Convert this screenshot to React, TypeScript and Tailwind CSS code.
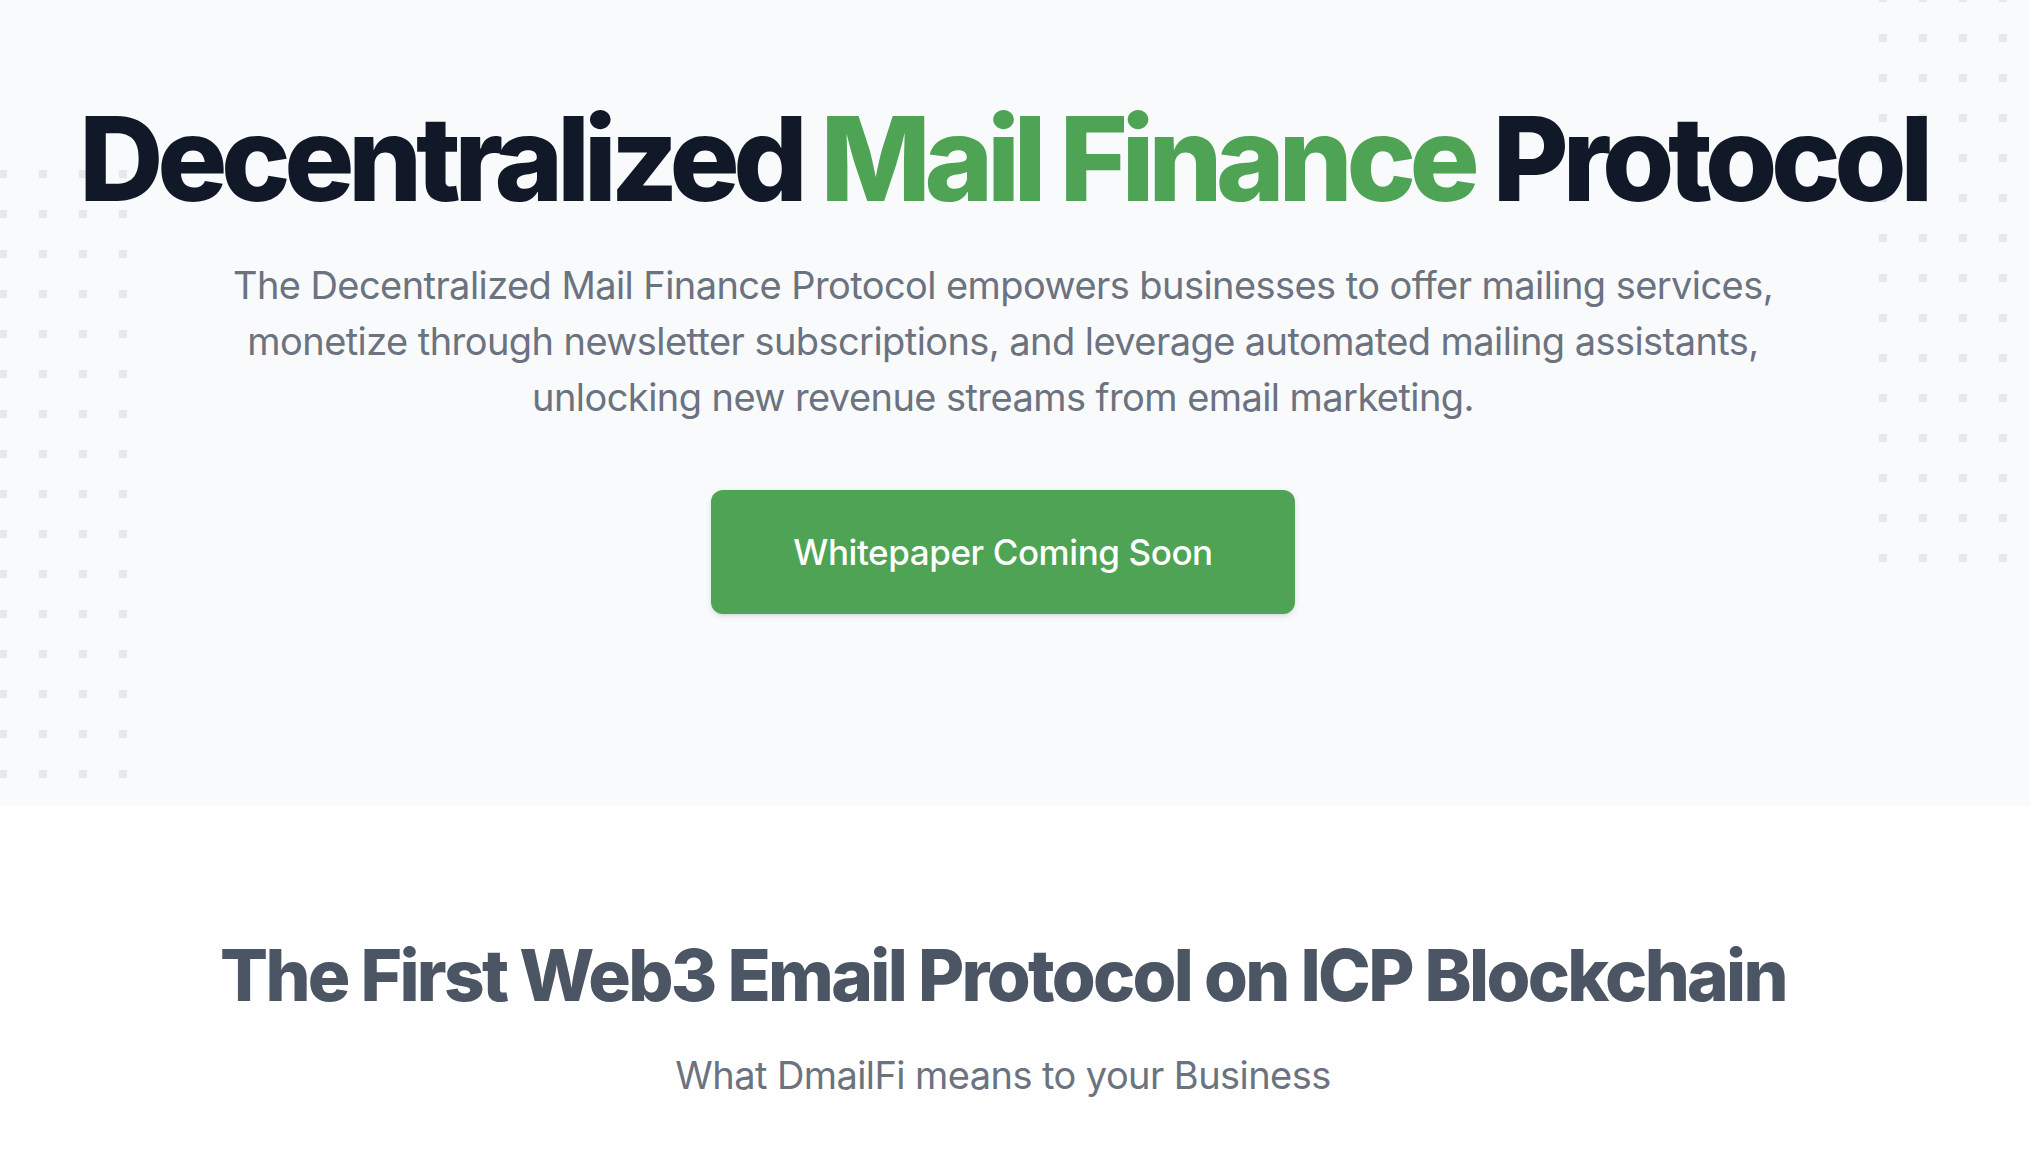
import React from "react";

function DotPattern({ id, width, height }: { id: string; width: number; height: number }) {
  return (
    <svg width={width} height={height} fill="none" aria-hidden="true">
      <defs>
        <pattern id={id} x="0" y="0" width="40" height="40" patternUnits="userSpaceOnUse">
          <rect x="0" y="0" width="8" height="8" fill="#e5e7eb" />
        </pattern>
      </defs>
      <rect width={width} height={height} fill={`url(#${id})`} />
    </svg>
  );
}

export default function App() {
  return (
    <div className="min-h-screen bg-white font-['Inter','Noto_Sans',sans-serif] antialiased">
      <section className="relative overflow-hidden bg-[#f9fafb]">
        <div className="pointer-events-none absolute left-[-1px] top-[170px]">
          <DotPattern id="dots-left" width={128} height={608} />
        </div>
        <div className="pointer-events-none absolute left-[1879px] top-[-6px]">
          <DotPattern id="dots-right" width={160} height={568} />
        </div>
        <div className="relative flex w-[2006px] flex-col items-center pt-[99px] pb-[192px] text-center">
          <h1 className="whitespace-nowrap text-[117px] leading-[120px] font-extrabold tracking-[-0.055em] text-[#111827]">
            Decentralized <span className="text-[#4ea355]">Mail Finance</span> Protocol
          </h1>
          <p className="mt-[38px] max-w-[1560px] text-[38px] leading-[56px] tracking-[-0.015em] text-[#6b7280]">
            The Decentralized Mail Finance Protocol empowers businesses to offer mailing services,
            <br />
            monetize through newsletter subscriptions, and leverage automated mailing assistants,
            <br />
            unlocking new revenue streams from email marketing.
          </p>
          <button className="mt-[65px] rounded-[12px] border-2 border-transparent bg-[#4ea355] px-[80px] py-[32px] text-[35px] leading-[56px] font-medium tracking-[-0.012em] text-white shadow-[0_2px_6px_rgba(0,0,0,0.1),0_2px_4px_-2px_rgba(0,0,0,0.1)]">
            Whitepaper Coming Soon
          </button>
        </div>
      </section>
      <section className="bg-white">
        <div className="flex w-[2006px] flex-col items-center pt-[129px] pb-[96px] text-center">
          <h2 className="whitespace-nowrap text-[71px] leading-[80px] font-extrabold tracking-[-0.038em] text-[#4b5563]">
            The First Web3 Email Protocol on ICP Blockchain
          </h2>
          <p className="mt-[32px] text-[38px] leading-[56px] tracking-[-0.015em] text-[#6b7280]">
            What DmailFi means to your Business
          </p>
        </div>
      </section>
    </div>
  );
}
